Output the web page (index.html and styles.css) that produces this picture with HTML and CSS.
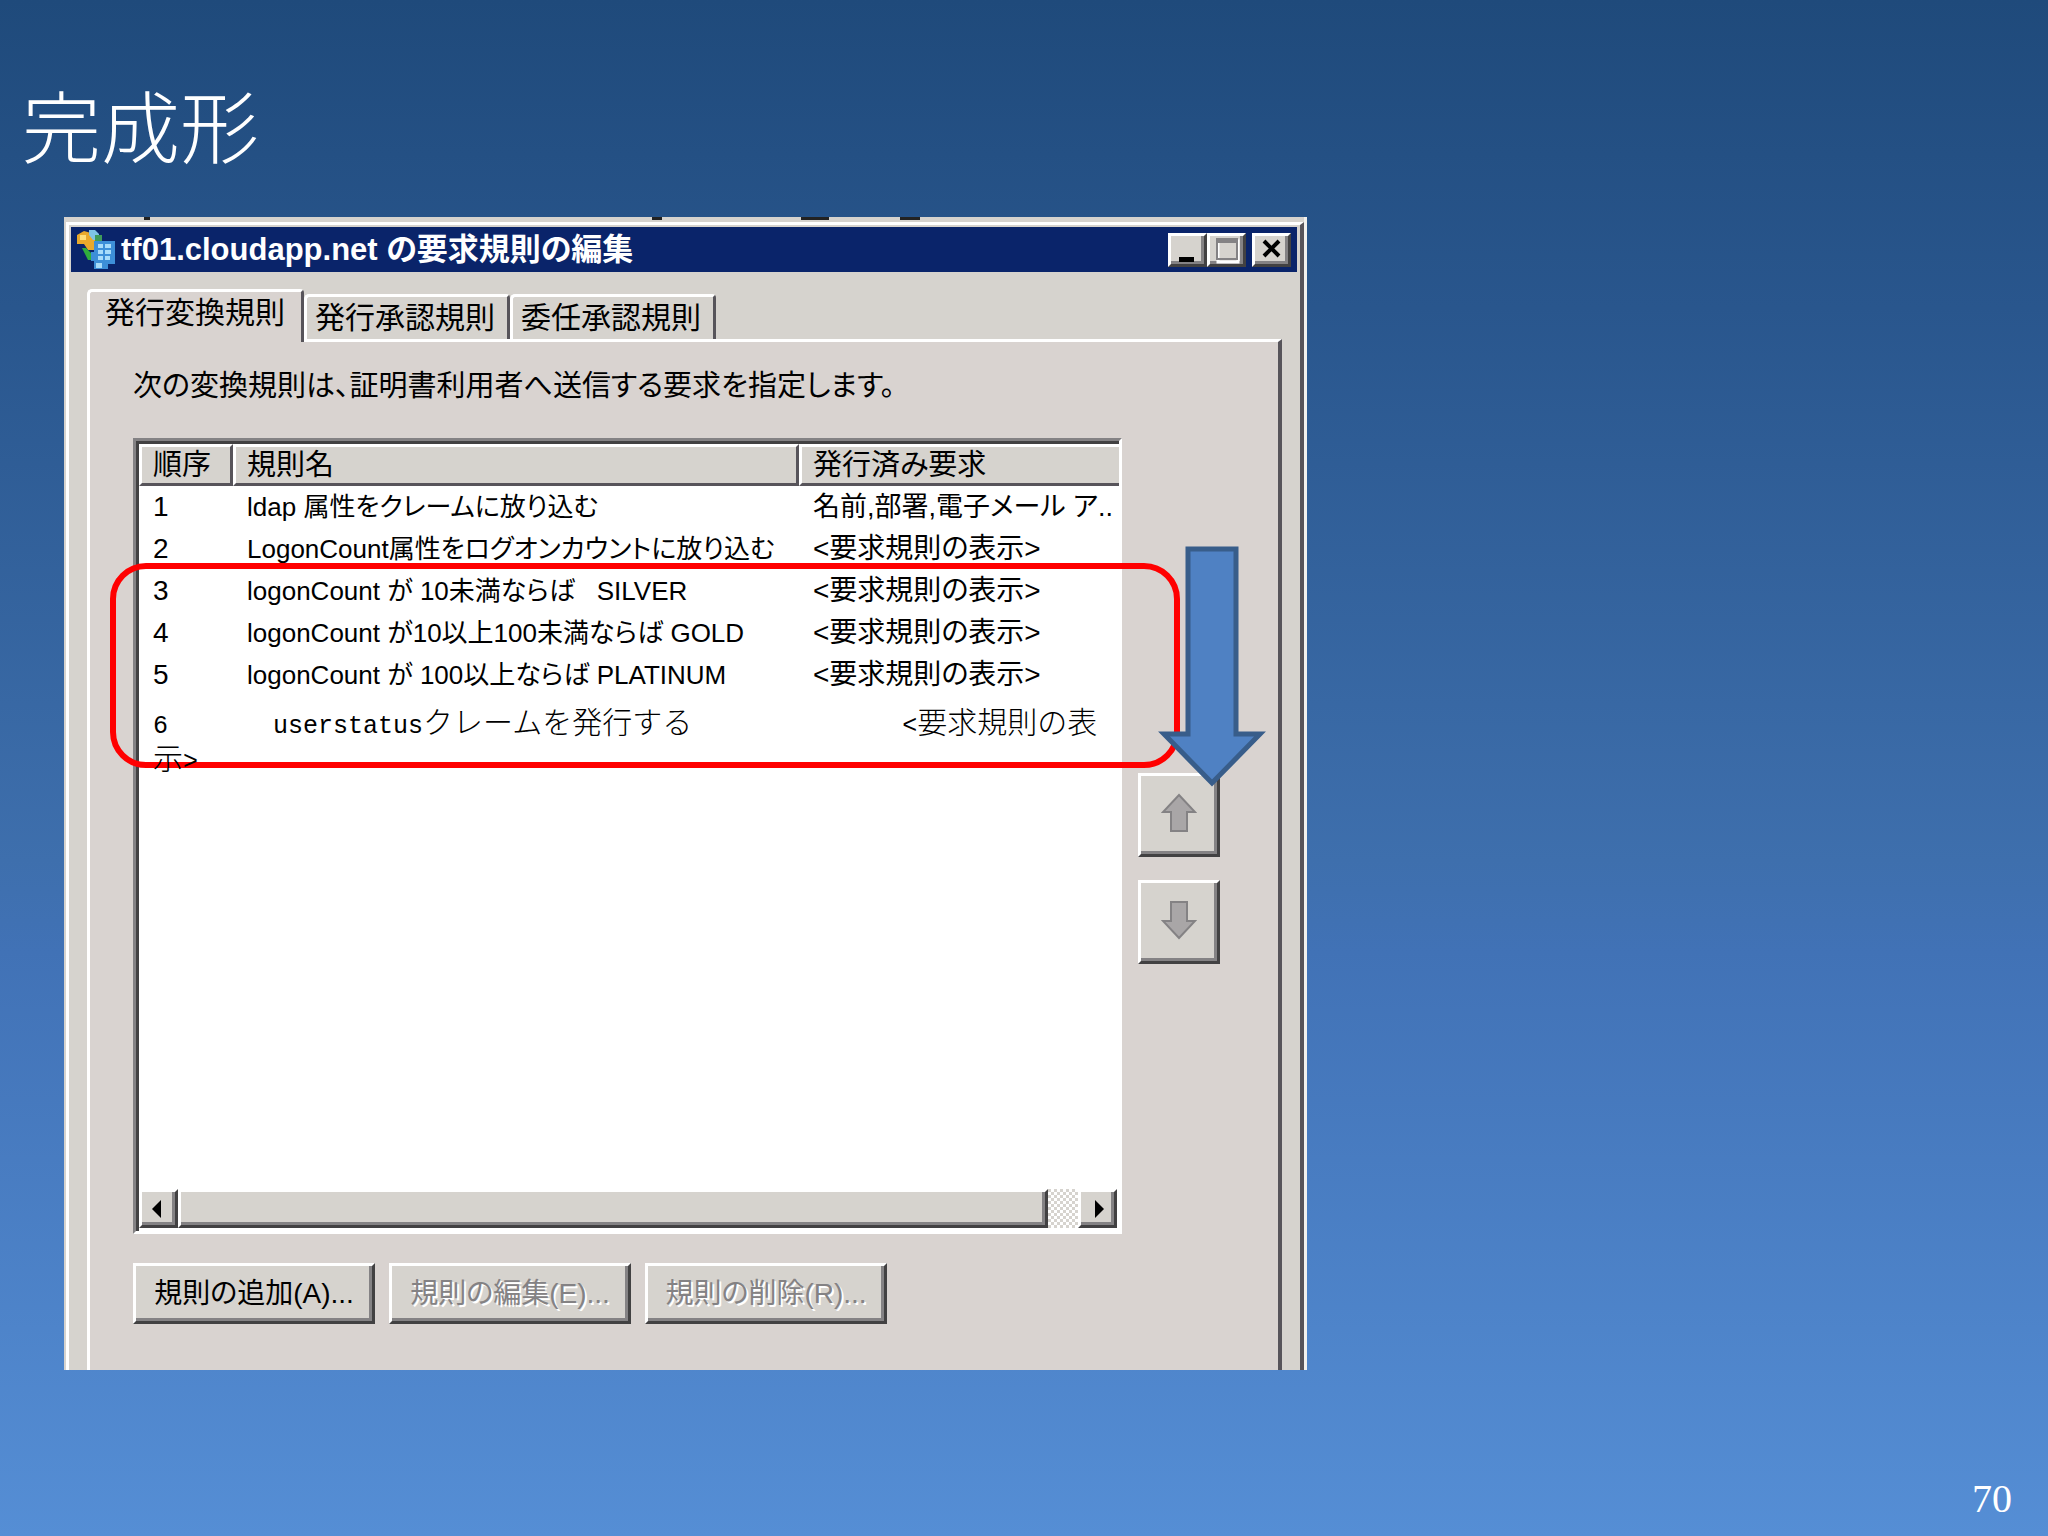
FILE: index.html
```html
<!DOCTYPE html>
<html lang="ja">
<head>
  <meta charset="UTF-8">
  <meta name="viewport" content="width=device-width, initial-scale=1.0">
  <title>完成形</title>
  <link rel="stylesheet" href="styles.css">
</head>
<body>
<h1 class="slide-title">完成形</h1>

<main class="slide-body">
  <section class="window">
    <div class="frame">
      <header class="titlebar">
        <svg class="app-icon" viewBox="0 0 40 40" aria-hidden="true">
          <path d="M1 5 L8 1 L15 3 L20 9 L20 20 L12 20 L8 14 L1 14 Z" fill="#e9a92c"/>
          <path d="M4 5 H10 V10 H4 Z" fill="#ffdf7a"/>
          <path d="M13 0 H19 L23 4 V10 H17 L13 5 Z" fill="#7fc4e8"/>
          <path d="M19 5 H26 V11 H19 Z" fill="#3f9a5a"/>
          <path d="M6 18 H10 L17 25 V30 H12 Z" fill="#2fae3c"/>
          <path d="M18 11 H39 V34 H32 V39 H18 V31 H15 V22 H18 Z" fill="#3d8fd8"/>
          <path d="M22 14h5v4h-5z M29 14h6v4h-6z M22 20h5v4h-5z M29 20h6v4h-6z M22 26h5v4h-5z M29 26h5v4h-5z M20 33h6v5h-6z" fill="#a8dcfa"/>
        </svg>
        <h2 class="caption">tf01.cloudapp.net の要求規則の編集</h2>
        <div class="window-buttons">
          <button class="raised" type="button" aria-label="最小化">
            <svg viewBox="0 0 32 28"><path d="M7 21h15v5H7z"/></svg>
          </button>
          <button class="raised" type="button" aria-label="最大化" disabled>
            <svg viewBox="0 0 32 28"><path d="M7 5h20v21H7z" fill="none" stroke="#fff" stroke-width="3"/><path d="M5 2h22v5H5z" fill="#848284"/><path d="M6 3h20v20H6z" fill="none" stroke="#848284" stroke-width="2"/></svg>
          </button>
          <button class="raised close" type="button" aria-label="閉じる">
            <svg viewBox="0 0 32 28"><path d="M8 5l15 15M23 5L8 20" stroke="#000" stroke-width="4"/></svg>
          </button>
        </div>
      </header>

      <div class="tabs" role="tablist">
        <button class="tab active" type="button" role="tab" aria-selected="true">発行変換規則</button>
        <button class="tab" type="button" role="tab">発行承認規則</button>
        <button class="tab" type="button" role="tab">委任承認規則</button>
      </div>

      <div class="panel">
        <p class="lead">次の変換規則は、証明書利用者へ送信する要求を指定します。</p>

        <div class="rules">
          <div class="list">
            <table>
              <thead>
                <tr><th class="col-order">順序</th><th class="col-name">規則名</th><th>発行済み要求</th></tr>
              </thead>
              <tbody>
                <tr><td>1</td><td class="name">ldap 属性をクレームに放り込む</td><td class="long">名前,部署,電子メール ア..</td></tr>
                <tr><td>2</td><td class="name">LogonCount属性をログオンカウントに放り込む</td><td>&lt;要求規則の表示&gt;</td></tr>
                <tr><td>3</td><td class="name">logonCount が 10未満ならば &nbsp; SILVER</td><td>&lt;要求規則の表示&gt;</td></tr>
                <tr><td>4</td><td class="name">logonCount が10以上100未満ならば GOLD</td><td>&lt;要求規則の表示&gt;</td></tr>
                <tr><td>5</td><td class="name">logonCount が 100以上ならば PLATINUM</td><td>&lt;要求規則の表示&gt;</td></tr>
              </tbody>
            </table>
            <div class="scrollbar">
              <button class="raised" type="button" aria-label="左へ"><svg viewBox="0 0 32 32"><path d="M18 7v18L9 16z"/></svg></button>
              <div class="thumb raised"></div>
              <div class="track"></div>
              <button class="raised" type="button" aria-label="右へ"><svg viewBox="0 0 32 32"><path d="M13 7v18L22 16z"/></svg></button>
            </div>
          </div>

          <div class="order-buttons">
            <button class="raised" type="button" aria-label="上へ" disabled>
              <svg viewBox="0 0 36 40"><path d="M18 2L34 19H26V38H10V19H2Z"/></svg>
            </button>
            <button class="raised" type="button" aria-label="下へ" disabled>
              <svg viewBox="0 0 36 40"><path d="M18 38L34 21H26V2H10V21H2Z"/></svg>
            </button>
          </div>

          <!-- notes laid over the list -->
          <div class="callout"></div>
          <p class="note"><span class="half">6       userstatus</span>クレームを発行する<span class="half">              &lt;</span>要求規則の表示<span class="half">&gt;</span></p>
          <svg class="big-arrow" viewBox="0 0 110 241" aria-hidden="true">
            <path d="M31 3H79V188H103L55 237L7 188H31Z"/>
          </svg>
        </div>

        <div class="actions">
          <button class="raised" type="button">規則の追加(A)...</button>
          <button class="raised" type="button" disabled>規則の編集(E)...</button>
          <button class="raised" type="button" disabled>規則の削除(R)...</button>
        </div>
      </div>
    </div>
  </section>
</main>

<footer class="page-number">70</footer>
</body>
</html>
```
FILE: styles.css
```css
* {
    box-sizing: border-box;
}

body {
    margin: 0;
    min-height: 100vh;
    display: flex;
    flex-direction: column;
    font-family: "Liberation Sans", "Noto Sans CJK JP", sans-serif;
    font-size: 28px;
    line-height: 42px;
    font-feature-settings: "palt";
    color: #000;
    background: linear-gradient(#1f4a7b, #29568d 20%, #3e6fad 56%, #4172b6 62%, #558ed5);
}

button {
    font: inherit;
    font-feature-settings: inherit;
    color: inherit;
    padding: 0;
    margin: 0;
}

.slide-title {
    margin: 0;
    padding: 80px 22px 49px;
    font-family: "Noto Sans CJK JP", sans-serif;
    font-size: 79px;
    font-weight: 300;
    font-feature-settings: normal;
    line-height: 88px;
    color: #fff;
}

.slide-body {
    display: grid;
    grid-template-columns: 5fr 3fr;
    padding-left: 64px;
}

/* dialog */
.window {
    padding: 5px 0 0 2px;
    background: #d6d3ce;
    background-image:
        linear-gradient(#222, #222), linear-gradient(#222, #222),
        linear-gradient(#222, #222), linear-gradient(#222, #222);
    background-repeat: no-repeat;
    background-size: 6px 3px, 10px 3px, 28px 3px, 20px 3px;
    background-position: 80px 0, 588px 0, 737px 0, 836px 0;
    box-shadow: 3px 0 #f2f1ee;
}

.frame {
    padding: 2px 3px 0 2px;
    border-top: 3px solid #fff;
    border-left: 3px solid #fff;
    border-right: 4px solid #57545a;
}

.raised {
    display: flex;
    align-items: center;
    justify-content: center;
    background: #d6d3ce;
    border: 3px solid;
    border-color: #fff #424142 #424142 #fff;
    border-radius: 0;
    box-shadow: inset -3px -3px #848284;
}

.titlebar {
    display: flex;
    align-items: center;
    height: 45px;
    padding: 0 6px 0 5px;
    background: #0a246a;
    color: #fff;
}

.app-icon {
    width: 40px;
    height: 40px;
}

.caption {
    flex: 1;
    margin: 0 0 0 5px;
    font-size: 31px;
    line-height: 45px;
    font-weight: bold;
}

.window-buttons {
    display: flex;
}

.window-buttons button {
    width: 39px;
    height: 34px;
}

.window-buttons svg {
    width: 32px;
    height: 28px;
}

.window-buttons .close {
    margin-left: 6px;
}

.tabs {
    display: flex;
    align-items: flex-end;
    padding: 17px 0 0 16px;
}

.tab {
    height: 45px;
    padding: 0 12px 0 8px;
    font-size: 30px;
    line-height: 42px;
    background: #d6d3ce;
    border: 3px solid;
    border-color: #fff #57545a transparent #fff;
    border-bottom: 0;
    border-radius: 5px 4px 0 0;
}

.tab.active {
    position: relative;
    height: 53px;
    margin-bottom: -3px;
    padding: 0 16px 8px 15px;
    background: #d9d3d0;
}

.panel {
    margin: 0 15px 0 16px;
    padding: 23px 58px 46px 43px;
    background: #d9d3d0;
    border-top: 3px solid #fff;
    border-left: 3px solid #fff;
    border-right: 4px solid #57545a;
}

.lead {
    margin: 0 0 31px;
    font-size: 29px;
}

/* rule list */
.rules {
    position: relative;
    display: flex;
    gap: 16px;
}

.list {
    flex: 1;
    min-width: 0;
    height: 796px;
    display: flex;
    flex-direction: column;
    justify-content: space-between;
    background: #fff;
    border: 3px solid;
    border-color: #848284 #fff #fff #848284;
    box-shadow: inset 3px 3px #424142;
    padding: 3px 0 3px 3px;
}

table {
    width: 100%;
    table-layout: fixed;
    border-collapse: separate;
    border-spacing: 0;
}

th,
td {
    height: 42px;
    padding: 0 0 0 14px;
    line-height: 42px;
    font-weight: normal;
    text-align: left;
    white-space: nowrap;
    overflow: hidden;
}

th {
    padding-left: 11px;
    font-size: 29px;
    line-height: 35px;
    background: #d6d3ce;
    border: 3px solid;
    border-color: #fff #57545a #57545a #fff;
}

th:last-child {
    border-right: 0;
}

.col-order {
    width: 94px;
}

.col-name {
    width: 566px;
}

.name {
    font-size: 26px;
}

.long {
    font-size: 27px;
}

.scrollbar {
    display: flex;
    height: 39px;
    margin-right: 2px;
}

.scrollbar button {
    width: 39px;
}

.scrollbar svg {
    width: 32px;
    height: 32px;
}

.thumb {
    flex: 1;
}

.track {
    width: 30px;
    background: repeating-conic-gradient(#fff 0 25%, #d6d3ce 0 50%) 0 0 / 6px 6px;
}

.order-buttons {
    display: flex;
    flex-direction: column;
    gap: 23px;
    padding-top: 335px;
}

.order-buttons button {
    width: 82px;
    height: 84px;
    padding-bottom: 4px;
}

.order-buttons svg {
    width: 36px;
    height: 40px;
    fill: #a9a6a7;
    stroke: #848284;
    stroke-width: 2px;
}

.callout {
    position: absolute;
    top: 125px;
    left: -23px;
    right: 40px;
    height: 205px;
    border: 6px solid #f00;
    border-radius: 36px;
}

.note {
    position: absolute;
    top: 264px;
    left: 20px;
    right: 110px;
    margin: 0;
    font-family: "Noto Sans CJK JP", sans-serif;
    font-size: 30px;
    font-weight: 300;
    font-feature-settings: normal;
    line-height: 36px;
    white-space: pre-wrap;
    word-break: break-all;
}

.half {
    font-family: "Liberation Mono", monospace;
    font-size: 25px;
    line-height: 1px;
}

.big-arrow {
    position: absolute;
    top: 108px;
    right: -47px;
    width: 110px;
    height: 241px;
    fill: #4f81c3;
    stroke: #385d8a;
    stroke-width: 5px;
}

.actions {
    display: flex;
    gap: 14px;
    margin-top: 29px;
}

.actions button {
    width: 242px;
    height: 61px;
}

.actions button:disabled {
    color: #848284;
    text-shadow: 2px 2px #fff;
}

.page-number {
    margin-top: auto;
    padding: 0 36px 17px;
    font-family: "Liberation Serif", serif;
    font-size: 40px;
    line-height: 40px;
    text-align: right;
    color: #fff;
}
```
